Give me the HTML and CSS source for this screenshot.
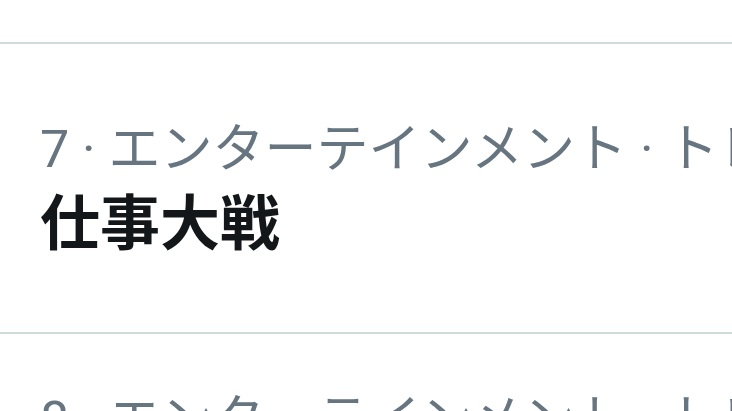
FILE: index.html
```html
<!DOCTYPE html>
<html lang="ja">
<head>
<meta charset="utf-8">
<link rel="stylesheet" href="styles.css">
</head>
<body>
<div class="list">
  <div class="spacer"></div>
  <div class="trend first">
    <div class="meta">7 · エンターテインメント · トレンド</div>
    <div class="title">仕事大戦</div>
  </div>
  <div class="trend second">
    <div class="meta">8 · エンターテインメント · トレンド</div>
    <div class="title">仕事大戦</div>
  </div>
</div>
</body>
</html>
```
FILE: styles.css
```css
html, body {
  margin: 0;
  padding: 0;
  background: #ffffff;
}
body {
  width: 732px;
  height: 411px;
  overflow: hidden;
  font-family: Roboto, "Noto Sans CJK JP", sans-serif;
}
.list {
  display: flex;
  flex-direction: column;
}
.spacer {
  height: 42px;
  border-bottom: 2px solid #cfd9de;
}
.trend {
  padding: 0 0 0 40px;
  border-bottom: 2px solid #cfd9de;
  white-space: nowrap;
  overflow: hidden;
}
.trend.first {
  padding-top: 74px;
  height: 214px;
}
.trend.second {
  padding-top: 55px;
  height: 100px;
}
.meta {
  font-size: 52px;
  line-height: 64px;
  color: #66757f;
}
.title {
  margin-top: 7px;
  font-size: 60px;
  line-height: 72px;
  font-weight: 700;
  color: #14171a;
}
```
